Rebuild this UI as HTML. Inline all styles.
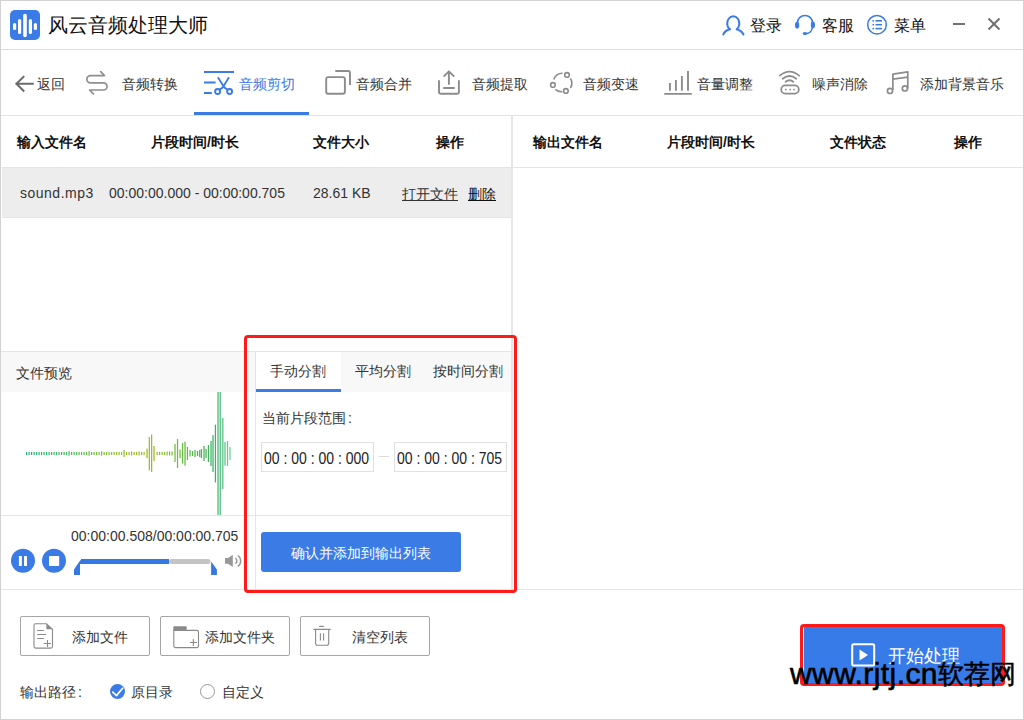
<!DOCTYPE html>
<html><head><meta charset="utf-8">
<style>
*{margin:0;padding:0;box-sizing:border-box}
html,body{width:1024px;height:720px;overflow:hidden;background:#fff}
body{position:relative;font-family:"Liberation Sans",sans-serif;color:#333}
.a{position:absolute}
.t{position:absolute;white-space:nowrap;line-height:1}
.j{text-align:justify;text-align-last:justify}
.hl{position:absolute;height:1px;background:#e5e5e5}
.vl{position:absolute;width:1px;background:#e5e5e5}
svg{position:absolute;overflow:visible}
</style></head><body>
<!-- window frame -->
<div class="a" style="left:0;top:0;width:1024px;height:720px;border:1px solid #d2d2d2"></div>

<!-- title bar -->
<div class="a" style="left:10px;top:10px;width:30px;height:30px;border-radius:5px;background:#3a7be5"></div>
<svg style="left:10px;top:10px" width="30" height="30" viewBox="0 0 30 30">
 <g stroke="#fff" stroke-width="3.2" stroke-linecap="round">
  <line x1="4.6" y1="14.5" x2="4.6" y2="18.5"/>
  <line x1="9.6" y1="10.5" x2="9.6" y2="22.5"/>
  <line x1="15" y1="5.5" x2="15" y2="25.5" stroke-width="3.6"/>
  <line x1="20.4" y1="10.5" x2="20.4" y2="22.5"/>
  <line x1="25.4" y1="14.5" x2="25.4" y2="18.5"/>
 </g>
</svg>
<div class="t j" style="left:48px;top:15px;font-size:20px;color:#111;width:160px">风云音频处理大师</div>

<div class="t j" style="left:750px;top:18px;font-size:16px;color:#111;width:32px">登录</div>
<div class="t j" style="left:822px;top:18px;font-size:16px;color:#111;width:32px">客服</div>
<div class="t j" style="left:894px;top:18px;font-size:16px;color:#111;width:32px">菜单</div>
<div class="hl" style="left:1px;top:49px;width:1022px;background:#dcdcdc"></div>


<!-- nav icons -->
<svg style="left:0;top:0" width="1024" height="120" viewBox="0 0 1024 120">
 <g fill="none" stroke="#6b6b6b" stroke-width="2" stroke-linecap="square" stroke-linejoin="miter">
  <path d="M23.5 76.8 L16.4 83.8 L23.5 90.8 M16.6 83.8 H32.8"/>
 </g>
 <g fill="none" stroke="#8e8e8e" stroke-width="1.7" stroke-linecap="round" stroke-linejoin="round">
  <path d="M100.7 71.6 L104.5 75.6 H90.5 A3.45 3.45 0 0 0 90.5 82.9 H103.5 A3.55 3.55 0 0 1 103.5 90 H89.5 L93.5 93.8"/>
 </g>
 <g fill="none" stroke="#3a7be5" stroke-width="2" stroke-linecap="butt">
  <path d="M204 72 H234 M204 82.4 H215.6 M204 92.9 H211.8"/>
  <path d="M217.9 77.3 L223.5 86.3 Q224.6 88.2 227.5 89.6 M229 77.3 L223.5 86.3 Q222.4 88.2 219.6 89.6" stroke-width="1.8"/>
  <circle cx="217.6" cy="91.5" r="2.5" stroke-width="1.9"/>
  <circle cx="229.6" cy="91.5" r="2.5" stroke-width="1.9"/>
 </g>
 <g fill="none" stroke="#8c8c8c" stroke-width="1.9" stroke-linecap="butt" stroke-linejoin="round">
  <rect x="326.2" y="77.1" width="18.7" height="16.7" rx="2"/>
  <path d="M335.3 71 H348 Q350 71 350 73 V85.1"/>
  <path d="M439 80.2 V92 Q439 93.8 441 93.8 H457 Q458.9 93.8 458.9 92 V80.2"/>
  <path d="M448.9 84.7 V71.6 M443.6 76.6 L448.9 71.3 L454.2 76.6 M443.3 88 H454.7"/>
 </g>
 <g fill="none" stroke="#8c8c8c" stroke-width="1.6">
  <circle cx="567" cy="74.9" r="2.3"/>
  <circle cx="552.9" cy="84.9" r="2.3"/>
  <circle cx="565.9" cy="90.9" r="2.3"/>
  <path d="M553.8 79.6 A9.2 9.2 0 0 1 562.6 73.3"/>
  <path d="M570.4 78.3 A9.2 9.2 0 0 1 570.4 88.0"/>
  <path d="M555.4 89.4 A9.2 9.2 0 0 0 562.4 91.7"/>
 </g>
 <g fill="none" stroke="#8c8c8c" stroke-width="1.9" stroke-linecap="butt">
  <path d="M664.2 93.9 H691.8 M669.9 90.7 V83.1 M675.9 90.7 V80.1 M681.9 90.7 V76.1 M688 90.7 V71.1"/>
 </g>
 <g fill="none" stroke="#8c8c8c" stroke-width="1.8" stroke-linecap="round">
  <rect x="781.2" y="85.4" width="17.6" height="8.3" rx="4.15"/>
  <path d="M779.8 75.6 Q789.6 67.6 799.1 75.6"/>
  <path d="M782.7 78.7 Q789.6 73.4 796.2 78.7"/>
  <path d="M785.6 81.8 Q789.6 78.6 793.3 81.8"/>
 </g>
 <g fill="#8c8c8c">
  <rect x="785" y="88.8" width="1.6" height="1.6"/>
  <rect x="789.4" y="88.8" width="1.6" height="1.6"/>
  <rect x="793.2" y="88.8" width="1.6" height="1.6"/>
 </g>
 <g fill="none" stroke="#8c8c8c" stroke-width="1.7" stroke-linejoin="round">
  <path d="M892.9 90 V74.2 L907.8 71.8 V88.4"/>
  <path d="M892.9 79.1 L907.8 77.1"/>
  <circle cx="890" cy="90.9" r="2.6"/>
  <circle cx="904.9" cy="88.4" r="2.6"/>
 </g>
</svg>
<!-- title right icons -->
<svg style="left:0;top:0" width="1024" height="50" viewBox="0 0 1024 50">
 <g fill="none" stroke="#3a7be5" stroke-width="2" stroke-linecap="round" stroke-linejoin="round">
  <path d="M729.9 29.2 A6.1 7 0 1 1 736.6 29.2 Q742 30.8 743.5 34.5"/>
  <path d="M729.9 29.2 Q724.4 30.8 723.3 34.5"/>
 </g>
 <g fill="none" stroke="#3a7be5" stroke-width="1.5" stroke-linecap="round">
  <path d="M797.4 23 A7.6 7.6 0 0 1 812.6 23"/>
  <path d="M812.2 28 Q811.5 32.8 807 33.5"/>
 </g>
 <g fill="#3a7be5">
  <ellipse cx="797.1" cy="25.2" rx="2.1" ry="3.4"/>
  <ellipse cx="812.9" cy="24.9" rx="2.1" ry="3.4"/>
  <ellipse cx="805" cy="33.5" rx="2.3" ry="1.5"/>
 </g>
 <circle cx="877" cy="24.7" r="9.3" fill="none" stroke="#3a7be5" stroke-width="1.5"/>
 <g fill="#3a7be5">
  <rect x="872.5" y="20" width="1.6" height="1.6"/><rect x="875.5" y="20" width="6.5" height="1.6"/>
  <rect x="872.5" y="23.9" width="1.6" height="1.6"/><rect x="875.5" y="23.9" width="6.5" height="1.6"/>
  <rect x="872.5" y="27.8" width="1.6" height="1.6"/><rect x="875.5" y="27.8" width="6.5" height="1.6"/>
 </g>
 <g stroke="#707070" stroke-width="2" fill="none">
  <path d="M953 24 H965"/>
  <path d="M988.5 18.5 L999.5 29.5 M999.5 18.5 L988.5 29.5"/>
 </g>
</svg>

<!-- nav -->
<div class="t j" style="left:37px;top:77px;font-size:14px;color:#333;width:28px">返回</div>
<div class="t j" style="left:122px;top:77px;font-size:14px;color:#333;width:56px">音频转换</div>
<div class="t j" style="left:239px;top:77px;font-size:14px;color:#3a7be5;width:56px">音频剪切</div>
<div class="t j" style="left:356px;top:77px;font-size:14px;color:#333;width:56px">音频合并</div>
<div class="t j" style="left:472px;top:77px;font-size:14px;color:#333;width:56px">音频提取</div>
<div class="t j" style="left:583px;top:77px;font-size:14px;color:#333;width:56px">音频变速</div>
<div class="t j" style="left:697px;top:77px;font-size:14px;color:#333;width:56px">音量调整</div>
<div class="t j" style="left:812px;top:77px;font-size:14px;color:#333;width:56px">噪声消除</div>
<div class="t j" style="left:920px;top:77px;font-size:14px;color:#333;width:84px">添加背景音乐</div>
<div class="hl" style="left:1px;top:115px;width:1022px;background:#e3e3e3"></div>
<div class="a" style="left:194px;top:112px;width:115px;height:3px;background:#3a7be5"></div>

<!-- left table -->
<div class="t j" style="left:17px;top:135px;font-size:14px;font-weight:bold;color:#111;width:70px">输入文件名</div>
<div class="t j" style="left:151px;top:135px;font-size:14px;font-weight:bold;color:#111;width:87.89px">片段时间/时长</div>
<div class="t j" style="left:313px;top:135px;font-size:14px;font-weight:bold;color:#111;width:56px">文件大小</div>
<div class="t j" style="left:436px;top:135px;font-size:14px;font-weight:bold;color:#111;width:28px">操作</div>
<div class="a" style="left:2px;top:167px;width:509px;height:51px;background:#ededed;border-top:1px solid #e4e4e4;border-bottom:1px solid #e4e4e4"></div>
<div class="t" style="left:20px;top:185px;font-size:14px;letter-spacing:0.5px;color:#333;transform:scaleY(1.1);transform-origin:0 0">sound.mp3</div>
<div class="t" style="left:109px;top:185px;font-size:14px;color:#333;transform:scaleY(1.1);transform-origin:0 0">00:00:00.000 - 00:00:00.705</div>
<div class="t" style="left:313px;top:185px;font-size:14px;color:#333;transform:scaleY(1.1);transform-origin:0 0">28.61 KB</div>
<div class="t j" style="left:402px;top:187px;font-size:14px;color:#333;text-decoration:underline;width:56px">打开文件</div>
<div class="t j" style="left:468px;top:187px;font-size:14px;color:#111;text-decoration:underline;width:28px">删除</div>

<!-- right table -->
<div class="t j" style="left:533px;top:135px;font-size:14px;font-weight:bold;color:#111;width:70px">输出文件名</div>
<div class="t j" style="left:667px;top:135px;font-size:14px;font-weight:bold;color:#111;width:87.89px">片段时间/时长</div>
<div class="t j" style="left:830px;top:135px;font-size:14px;font-weight:bold;color:#111;width:56px">文件状态</div>
<div class="t j" style="left:954px;top:135px;font-size:14px;font-weight:bold;color:#111;width:28px">操作</div>
<div class="hl" style="left:513px;top:167px;width:510px"></div>

<div class="a" style="left:511px;top:116px;width:2px;height:473px;background:#e6e6e6"></div>

<!-- preview -->
<div class="hl" style="left:1px;top:351px;width:510px"></div>
<div class="a" style="left:1px;top:352px;width:254px;height:40px;background:#f8f8f8"></div>
<div class="t j" style="left:16px;top:366px;font-size:14px;color:#333;width:56px">文件预览</div>
<div class="hl" style="left:1px;top:515px;width:510px"></div>
<div class="vl" style="left:255px;top:352px;height:237px"></div>
<svg style="left:0;top:0" width="256" height="520" viewBox="0 0 256 520"><rect x="26.0" y="452.0" width="1.2" height="3.0" fill="rgb(40,175,125)"/><rect x="28.5" y="452.0" width="1.2" height="3.0" fill="rgb(41,175,123)"/><rect x="31.0" y="452.0" width="1.2" height="3.0" fill="rgb(43,176,121)"/><rect x="33.5" y="452.0" width="1.2" height="3.0" fill="rgb(45,176,119)"/><rect x="36.0" y="452.0" width="1.2" height="3.0" fill="rgb(46,177,118)"/><rect x="38.5" y="452.0" width="1.2" height="3.0" fill="rgb(48,177,116)"/><rect x="41.0" y="452.0" width="1.2" height="3.0" fill="rgb(50,178,114)"/><rect x="43.5" y="452.0" width="1.2" height="3.0" fill="rgb(51,178,113)"/><rect x="46.0" y="452.0" width="1.2" height="3.0" fill="rgb(53,179,111)"/><rect x="48.5" y="452.0" width="1.2" height="3.0" fill="rgb(55,180,109)"/><rect x="51.0" y="452.0" width="1.2" height="3.0" fill="rgb(57,180,107)"/><rect x="53.5" y="452.0" width="1.2" height="3.0" fill="rgb(58,181,106)"/><rect x="56.0" y="452.0" width="1.2" height="3.0" fill="rgb(60,181,104)"/><rect x="58.5" y="452.0" width="1.2" height="3.0" fill="rgb(62,182,102)"/><rect x="61.0" y="452.0" width="1.2" height="3.0" fill="rgb(63,182,101)"/><rect x="63.5" y="452.0" width="1.2" height="3.0" fill="rgb(65,183,99)"/><rect x="66.0" y="452.0" width="1.2" height="3.0" fill="rgb(67,184,97)"/><rect x="68.5" y="451.2" width="1.2" height="4.5" fill="rgb(68,184,96)"/><rect x="71.0" y="452.0" width="1.2" height="3.0" fill="rgb(71,185,93)"/><rect x="73.5" y="452.0" width="1.2" height="3.0" fill="rgb(76,185,91)"/><rect x="76.0" y="452.0" width="1.2" height="3.0" fill="rgb(80,185,88)"/><rect x="78.5" y="452.0" width="1.2" height="3.0" fill="rgb(84,186,85)"/><rect x="81.0" y="452.0" width="1.2" height="3.0" fill="rgb(89,186,82)"/><rect x="83.5" y="452.0" width="1.2" height="3.0" fill="rgb(93,186,79)"/><rect x="86.0" y="452.0" width="1.2" height="3.0" fill="rgb(98,187,77)"/><rect x="88.5" y="451.2" width="1.2" height="4.5" fill="rgb(102,187,74)"/><rect x="91.0" y="452.0" width="1.2" height="3.0" fill="rgb(106,187,71)"/><rect x="93.5" y="452.0" width="1.2" height="3.0" fill="rgb(111,187,68)"/><rect x="96.0" y="452.0" width="1.2" height="3.0" fill="rgb(115,188,65)"/><rect x="98.5" y="452.0" width="1.2" height="3.0" fill="rgb(119,188,62)"/><rect x="101.0" y="451.2" width="1.2" height="4.5" fill="rgb(124,188,60)"/><rect x="103.5" y="452.0" width="1.2" height="3.0" fill="rgb(128,189,57)"/><rect x="106.0" y="452.0" width="1.2" height="3.0" fill="rgb(133,189,54)"/><rect x="108.5" y="452.0" width="1.2" height="3.0" fill="rgb(137,189,51)"/><rect x="111.0" y="452.0" width="1.2" height="3.0" fill="rgb(140,189,49)"/><rect x="113.5" y="452.0" width="1.2" height="3.0" fill="rgb(142,189,48)"/><rect x="116.0" y="452.0" width="1.2" height="3.0" fill="rgb(143,189,47)"/><rect x="118.5" y="452.0" width="1.2" height="3.0" fill="rgb(145,188,46)"/><rect x="121.0" y="452.0" width="1.2" height="3.0" fill="rgb(146,188,45)"/><rect x="123.5" y="450.0" width="1.2" height="7.0" fill="rgb(148,188,44)"/><rect x="126.0" y="452.0" width="1.2" height="3.0" fill="rgb(150,188,44)"/><rect x="128.5" y="452.0" width="1.2" height="3.0" fill="rgb(151,187,43)"/><rect x="131.0" y="451.5" width="1.2" height="4.0" fill="rgb(153,187,42)"/><rect x="133.5" y="452.0" width="1.2" height="3.0" fill="rgb(154,187,41)"/><rect x="136.0" y="452.0" width="1.2" height="3.0" fill="rgb(156,186,40)"/><rect x="138.5" y="451.5" width="1.2" height="4.0" fill="rgb(157,186,39)"/><rect x="141.0" y="452.0" width="1.2" height="3.0" fill="rgb(159,186,38)"/><rect x="143.5" y="452.0" width="1.2" height="3.0" fill="rgb(160,185,37)"/><rect x="156.5" y="452.0" width="1.2" height="3.0" fill="rgb(152,186,40)"/><rect x="159.0" y="452.0" width="1.2" height="3.0" fill="rgb(147,186,43)"/><rect x="161.5" y="452.0" width="1.2" height="3.0" fill="rgb(142,187,45)"/><rect x="164.0" y="452.0" width="1.2" height="3.0" fill="rgb(137,187,47)"/><rect x="166.5" y="451.5" width="1.2" height="4.0" fill="rgb(132,187,49)"/><rect x="169.0" y="451.5" width="1.2" height="4.0" fill="rgb(127,188,51)"/><rect x="171.5" y="451.5" width="1.2" height="4.0" fill="rgb(122,188,54)"/><rect x="146.4" y="448.6" width="1.25" height="9.4" fill="rgb(163,185,36)"/><rect x="148.7" y="437.0" width="1.25" height="33.5" fill="rgb(164,185,35)"/><rect x="151.0" y="434.6" width="1.25" height="37.4" fill="rgb(161,185,36)"/><rect x="153.4" y="446.0" width="1.25" height="15.0" fill="rgb(157,185,38)"/><rect x="174.4" y="444.0" width="1.25" height="18.0" fill="rgb(115,189,57)"/><rect x="176.9" y="439.0" width="1.25" height="29.0" fill="rgb(110,189,59)"/><rect x="179.4" y="449.5" width="1.25" height="8.5" fill="rgb(106,189,61)"/><rect x="181.9" y="443.0" width="1.25" height="20.5" fill="rgb(102,187,64)"/><rect x="184.4" y="441.6" width="1.25" height="24.0" fill="rgb(98,186,66)"/><rect x="186.8" y="447.0" width="1.25" height="13.0" fill="rgb(95,185,68)"/><rect x="189.4" y="450.0" width="1.25" height="6.5" fill="rgb(90,184,70)"/><rect x="191.9" y="451.0" width="1.25" height="5.0" fill="rgb(86,183,73)"/><rect x="194.4" y="450.0" width="1.25" height="7.0" fill="rgb(82,182,75)"/><rect x="196.9" y="451.0" width="1.25" height="5.0" fill="rgb(78,181,77)"/><rect x="199.1" y="450.0" width="1.25" height="7.0" fill="rgb(75,180,79)"/><rect x="200.8" y="449.0" width="1.25" height="9.0" fill="rgb(73,179,82)"/><rect x="203.4" y="446.0" width="1.25" height="15.0" fill="rgb(69,179,86)"/><rect x="205.4" y="449.0" width="1.25" height="9.0" fill="rgb(67,179,90)"/><rect x="207.8" y="445.0" width="1.25" height="17.0" fill="rgb(63,178,94)"/><rect x="210.4" y="440.8" width="1.25" height="25.2" fill="rgb(60,178,98)"/><rect x="212.4" y="435.0" width="1.25" height="37.0" fill="rgb(57,178,101)"/><rect x="214.8" y="424.7" width="1.25" height="57.7" fill="rgb(56,178,106)"/><rect x="217.4" y="392.0" width="1.25" height="123.0" fill="rgb(66,183,114)"/><rect x="219.6" y="392.0" width="1.25" height="123.0" fill="rgb(74,187,121)"/><rect x="222.2" y="418.0" width="1.25" height="71.0" fill="rgb(84,192,130)"/><rect x="224.4" y="442.0" width="1.25" height="23.6" fill="rgb(93,196,137)"/><rect x="226.9" y="441.0" width="1.25" height="25.0" fill="rgb(102,201,145)"/><rect x="229.4" y="447.0" width="1.25" height="13.0" fill="rgb(112,206,153)"/></svg>
<svg style="left:0;top:0" width="256" height="590" viewBox="0 0 256 590">
 <circle cx="23" cy="560.8" r="12" fill="#3a7be5"/>
 <rect x="18.9" y="556" width="3" height="10" rx="0.6" fill="#fff"/>
 <rect x="24" y="556" width="3" height="10" rx="0.6" fill="#fff"/>
 <circle cx="54" cy="560.8" r="12" fill="#3a7be5"/>
 <rect x="49" y="556" width="10.2" height="10" rx="0.8" fill="#fff"/>
 <rect x="169" y="559" width="41.5" height="5" rx="2.5" fill="#c4c4c4"/>
 <rect x="81" y="559" width="88" height="5" fill="#3478e3"/>
 <path d="M74 575 V569.5 L80.3 560.2 H81.2 V564 H80 V575 Z" fill="#3478e3"/>
 <path d="M211.1 561.4 L216.9 569.6 V575 H211.1 Z" fill="#3478e3"/>
 <path d="M225 557.9 H228 L232.8 554.7 V567 L228 563.7 H225 Z" fill="#999"/>
 <path d="M235.4 558.2 A3.2 3.2 0 0 1 235.4 563.6" fill="none" stroke="#999" stroke-width="1.5"/>
 <path d="M237.8 555.5 A6.5 6.5 0 0 1 237.8 566.3" fill="none" stroke="#999" stroke-width="1.5"/>
</svg>
<div class="t" style="left:71px;top:528px;font-size:14px;color:#333;transform:scaleY(1.08);transform-origin:0 0">00:00:00.508/00:00:00.705</div>

<!-- tabs -->
<div class="a" style="left:256px;top:352px;width:255px;height:40px;background:#f8f8f8"></div>
<div class="a" style="left:256px;top:352px;width:85px;height:40px;background:#fff"></div>
<div class="a" style="left:256px;top:389px;width:85px;height:3px;background:#3a7be5"></div>
<div class="t j" style="left:270px;top:364px;font-size:14px;color:#333;width:56px">手动分割</div>
<div class="t j" style="left:355px;top:364px;font-size:14px;color:#333;width:56px">平均分割</div>
<div class="t j" style="left:433px;top:364px;font-size:14px;color:#333;width:70px">按时间分割</div>
<div class="t j" style="left:262px;top:411px;font-size:14px;color:#333;width:89.89px">当前片段范围<span style="margin-left:2px">:</span></div>
<div class="a" style="left:261px;top:442px;width:113px;height:30px;border:1px solid #e0e0e0"></div>
<div class="a" style="left:394px;top:442px;width:113px;height:30px;border:1px solid #e0e0e0"></div>
<div class="a" style="left:379px;top:456px;width:10px;height:1px;background:#ddd"></div>
<div class="t" style="left:264px;top:451px;font-size:14px;transform:scaleY(1.12);transform-origin:0 0;color:#222">00 : 00 : 00 : 000</div>
<div class="t" style="left:397px;top:451px;font-size:14px;transform:scaleY(1.12);transform-origin:0 0;color:#222">00 : 00 : 00 : 705</div>
<div class="a" style="left:261px;top:532px;width:200px;height:40px;border-radius:3px;background:#3a7be5"></div>
<div class="t j" style="left:291px;top:546px;font-size:14px;color:#fff;width:140px">确认并添加到输出列表</div>

<div class="hl" style="left:1px;top:589px;width:1022px"></div>

<!-- red box -->
<div class="a" style="left:244px;top:335px;width:273px;height:258px;border:3px solid #ff1a1a;border-radius:4px"></div>

<!-- bottom buttons -->
<div class="a" style="left:20px;top:616px;width:130px;height:40px;border:1px solid #a6a6a6;border-radius:2px"></div>
<div class="a" style="left:160px;top:616px;width:130px;height:40px;border:1px solid #a6a6a6;border-radius:2px"></div>
<div class="a" style="left:300px;top:616px;width:130px;height:40px;border:1px solid #a6a6a6;border-radius:2px"></div>
<div class="t j" style="left:72px;top:630px;font-size:14px;color:#333;width:56px">添加文件</div>
<div class="t j" style="left:205px;top:630px;font-size:14px;color:#333;width:70px">添加文件夹</div>
<div class="t j" style="left:352px;top:630px;font-size:14px;color:#333;width:56px">清空列表</div>

<div class="t j" style="left:20px;top:685px;font-size:14px;color:#333;width:61.89px">输出路径<span style="margin-left:2px">:</span></div>
<div class="a" style="left:110px;top:684px;width:15px;height:15px;border-radius:50%;background:#3a7be5"></div>
<div class="t j" style="left:131px;top:685px;font-size:14px;color:#333;width:42px">原目录</div>
<div class="a" style="left:200px;top:684px;width:15px;height:15px;border-radius:50%;border:1px solid #999"></div>
<div class="t j" style="left:222px;top:685px;font-size:14px;color:#333;width:42px">自定义</div>

<!-- start button -->
<div class="a" style="left:804px;top:627px;width:199px;height:56px;background:#377be8"></div>
<div class="a" style="left:800px;top:624px;width:205px;height:62px;border:3px solid #ff1a1a;border-radius:4px"></div>
<div class="t j" style="left:888px;top:647px;font-size:18px;color:#fff;width:72px">开始处理</div>


<svg style="left:0;top:0" width="1024" height="720" viewBox="0 0 1024 720">
 <g fill="none" stroke="#8a8a8a" stroke-width="1.1">
  <path d="M46.4 623.7 H35.6 Q34 623.7 34 625.3 V646.5 Q34 648.1 35.6 648.1 H50.9 Q52.5 648.1 52.5 646.5 V629.3 Z"/>
  <path d="M37.2 630.5 H43.8 M37.2 634.5 H46 M37.2 638.5 H43.8 M43.8 643.5 H51 M47.5 640 V647"/>
  <path d="M173.8 630.4 H197 Q198.5 630.4 198.5 632 V646 Q198.5 647.6 197 647.6 H175.4 Q173.8 647.6 173.8 646 Z"/>
  <path d="M190 642.5 H197 M193.3 639 V646"/>
  <path d="M319.1 626.4 H323.8 M313.3 629.4 H330.7 M315.6 629.4 V643.3 Q315.6 645.3 317.6 645.3 H326.7 Q328.7 645.3 328.7 643.3 V629.4 M320.4 633.3 V640.4 M323.6 633.3 V640.4"/>
 </g>
 <path d="M46.4 623.7 V629.3 H52.5 Z" fill="#8a8a8a"/>
 <rect x="173.3" y="626.2" width="13.4" height="4.4" rx="0.8" fill="#8a8a8a"/>
 <path d="M112.8 692.1 L116.5 695.6 L122.6 688.3" fill="none" stroke="#fff" stroke-width="1.7" stroke-linecap="round" stroke-linejoin="round"/>
 <rect x="852.2" y="644.2" width="22" height="21.4" rx="1.5" fill="none" stroke="#fff" stroke-width="2"/>
 <path d="M859.5 649.5 L868 655 L859.5 660.5 Z" fill="#fff"/>
</svg>

<!-- watermark -->
<div class="t" style="left:790px;top:659px;font-size:30px;letter-spacing:0.42px;color:#000;-webkit-text-stroke:0.6px #000">www.rjtj.cn</div>
<div class="t j" style="left:938px;top:662px;font-size:25.5px;color:#000;-webkit-text-stroke:0.5px #000;width:78px">软荐网</div>
</body></html>
